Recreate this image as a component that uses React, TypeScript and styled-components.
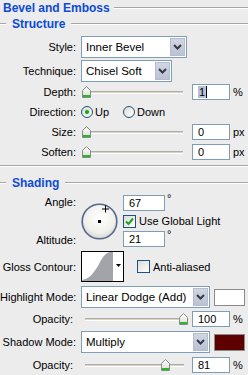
import React from "react";
import styled, { createGlobalStyle } from "styled-components";

const Global = createGlobalStyle`
  body {
    margin: 0;
    background: #ececec;
  }
`;

const Panel = styled.div`
  width: 248px;
  height: 375px;
  overflow: hidden;
  background: #ececec;
  font-family: "Liberation Sans", Arial, sans-serif;
  font-size: 11px;
  color: #000;
  display: flex;
  flex-direction: column;
`;

const Groove = styled.div`
  flex: 1;
  height: 0;
  border-top: 1px solid #a6a6a6;
  border-bottom: 1px solid #ffffff;
`;

const TitleRow = styled.div`
  height: 16px;
  display: flex;
  align-items: center;
  gap: 4px;
  padding-left: 3px;
`;

const Title = styled.span`
  font-weight: bold;
  font-size: 12px;
  color: #0b4bd6;
`;

const SubRow = styled.div<{ $mt?: number }>`
  height: 16px;
  margin-top: ${(p) => p.$mt ?? 0}px;
  display: flex;
  align-items: center;
  gap: 6px;
`;

const Stub = styled.div`
  width: 6px;
  border-top: 1px solid #a6a6a6;
  border-bottom: 1px solid #ffffff;
`;

const Divider = styled.div`
  margin-top: 5px;
  border-top: 1px solid #a6a6a6;
  border-bottom: 1px solid #ffffff;
`;

const Row = styled.div<{ $h: number; $mt: number }>`
  height: ${(p) => p.$h}px;
  margin-top: ${(p) => p.$mt}px;
  display: flex;
  align-items: center;
`;

const Label = styled.div<{ $w?: number }>`
  width: ${(p) => p.$w ?? 76}px;
  text-align: right;
  margin-right: ${(p) => 81 - (p.$w ?? 76)}px;
  flex-shrink: 0;
  white-space: nowrap;
`;

const Select = styled.div<{ $w: number }>`
  width: ${(p) => p.$w}px;
  height: 22px;
  box-sizing: border-box;
  border: 1px solid #7f9db9;
  background: #fff;
  display: flex;
  align-items: center;
  padding: 1px;
  font-size: 11.5px;
`;

const SelectText = styled.span`
  flex: 1;
  padding-left: 3px;
`;

const SelectButton = styled.div`
  width: 15px;
  height: 18px;
  box-sizing: border-box;
  border: 1px solid #b4bccf;
  background: linear-gradient(#d2d6e2, #bcc1d3);
  display: flex;
  align-items: center;
  justify-content: center;
`;

const Slider = styled.div<{ $w: number; $ml: number }>`
  width: ${(p) => p.$w}px;
  margin-left: ${(p) => p.$ml}px;
  height: 14px;
  position: relative;
  display: flex;
  align-items: center;
`;

const Track = styled.div`
  width: 100%;
  height: 1px;
  border-top: 1px solid #b0ada2;
  border-bottom: 1px solid #ffffff;
  background: #d6d3ca;
`;

const ThumbWrap = styled.div`
  position: absolute;
  top: 1px;
  width: 9px;
  height: 12px;
`;

const NumBox = styled.div<{ $ml?: number; $w?: number }>`
  width: ${(p) => p.$w ?? 38}px;
  height: 16px;
  margin-left: ${(p) => p.$ml ?? 0}px;
  box-sizing: border-box;
  border: 1px solid #7f9db9;
  background: #fff;
  display: flex;
  align-items: center;
  padding-left: 5px;
  flex-shrink: 0;
`;

const Unit = styled.span`
  margin-left: 3px;
`;

const Selected = styled.span`
  background: #b6c0d8;
  padding: 0 1px;
  border-right: 1px solid #000;
`;

const RadioItem = styled.label<{ $ml?: number }>`
  display: flex;
  align-items: center;
  gap: 2px;
  margin-left: ${(p) => p.$ml ?? 0}px;
`;

const RadioDot = styled.span<{ $on?: boolean }>`
  width: 12px;
  height: 12px;
  box-sizing: border-box;
  border-radius: 50%;
  border: 1px solid #1c5180;
  background: linear-gradient(135deg, #dcdcd6, #ffffff);
  display: flex;
  align-items: center;
  justify-content: center;
  &::after {
    content: "";
    width: 4px;
    height: 4px;
    border-radius: 50%;
    background: ${(p) => (p.$on ? "#21a121" : "transparent")};
    box-shadow: ${(p) => (p.$on ? "0 0 1px #5fd35f" : "none")};
  }
`;

const CheckItem = styled.label<{ $ml?: number }>`
  display: flex;
  align-items: center;
  gap: 3px;
  margin-left: ${(p) => p.$ml ?? 0}px;
`;

const Box = styled.span`
  width: 13px;
  height: 13px;
  box-sizing: border-box;
  border: 1px solid #1c5180;
  background: linear-gradient(135deg, #dcdcd6, #ffffff);
  display: flex;
  align-items: center;
  justify-content: center;
`;

const AngleGrid = styled.div`
  margin-top: 4px;
  display: grid;
  grid-template-columns: 76px 37px 44px 1fr;
  grid-template-rows: 16px 12px 16px;
  row-gap: 4px;
  column-gap: 5px;
  align-items: center;
`;

const GridLabel = styled.div<{ $row: number }>`
  grid-column: 1;
  grid-row: ${(p) => p.$row};
  text-align: right;
  align-self: center;
  margin-top: ${(p) => (p.$row === 1 ? -3 : 1)}px;
`;

const Dial = styled.div`
  grid-column: 2;
  grid-row: 1 / 4;
  align-self: center;
  width: 37px;
  height: 37px;
`;

const GridCell = styled.div<{ $row: number }>`
  grid-column: 3 / 5;
  grid-row: ${(p) => p.$row};
  display: flex;
  align-items: center;
`;

const Degree = styled.span`
  align-self: flex-start;
  margin-left: 2px;
  margin-top: -3px;
`;

const Contour = styled.div`
  width: 43px;
  height: 31px;
  box-sizing: border-box;
  border: 1px solid #000;
  background: #fff;
  display: flex;
`;

const ContourArrow = styled.div`
  flex: 1;
  display: flex;
  align-items: center;
  justify-content: center;
  padding-bottom: 2px;
`;

const Swatch = styled.div<{ $c: string }>`
  width: 31px;
  height: 17px;
  margin-left: 4px;
  box-sizing: border-box;
  border: 1px solid #8a8a8a;
  background: ${(p) => p.$c};
`;

const Chevron = () => (
  <svg width="9" height="6" viewBox="0 0 9 6">
    <path d="M1 1 L4.5 4.5 L8 1" fill="none" stroke="#333a4a" strokeWidth="2" />
  </svg>
);

const Thumb = () => (
  <svg width="9" height="12" viewBox="0 0 9 12">
    <defs>
      <linearGradient id="tg" x1="0" y1="0" x2="0" y2="1">
        <stop offset="0" stopColor="#ffffff" />
        <stop offset="1" stopColor="#dcdcd0" />
      </linearGradient>
    </defs>
    <path d="M0.5 4.5 L4.5 0.5 L8.5 4.5 L8.5 11.5 L0.5 11.5 Z" fill="url(#tg)" stroke="#7f8c8a" />
    <rect x="1" y="9" width="7" height="2" fill="#2bb52b" />
  </svg>
);

const Check = () => (
  <svg width="9" height="9" viewBox="0 0 9 9">
    <path d="M1 4.5 L3.5 7 L8 1.5" fill="none" stroke="#21a121" strokeWidth="2" />
  </svg>
);

function SliderRow({
  label,
  value,
  unit,
  pos,
  mt,
  lw,
  sw = 101,
  sml = 1,
}: {
  label: string;
  value: React.ReactNode;
  unit: string;
  pos: number;
  mt: number;
  lw?: number;
  sw?: number;
  sml?: number;
}) {
  return (
    <Row $h={16} $mt={mt}>
      <Label $w={lw}>{label}</Label>
      <Slider $w={sw} $ml={sml}>
        <Track />
        <ThumbWrap style={{ left: pos }}>
          <Thumb />
        </ThumbWrap>
      </Slider>
      <NumBox $ml={192 - 81 - sml - sw}>{value}</NumBox>
      <Unit>{unit}</Unit>
    </Row>
  );
}

export default function App() {
  return (
    <Panel>
      <Global />
      <TitleRow>
        <Title>Bevel and Emboss</Title>
        <Groove />
      </TitleRow>
      <SubRow>
        <Stub />
        <Title>Structure</Title>
        <Groove />
      </SubRow>

      <Row $h={22} $mt={4}>
        <Label>Style:</Label>
        <Select $w={106}>
          <SelectText>Inner Bevel</SelectText>
          <SelectButton>
            <Chevron />
          </SelectButton>
        </Select>
      </Row>
      <Row $h={22} $mt={2}>
        <Label>Technique:</Label>
        <Select $w={91}>
          <SelectText>Chisel Soft</SelectText>
          <SelectButton>
            <Chevron />
          </SelectButton>
        </Select>
      </Row>

      <SliderRow
        label="Depth:"
        mt={2}
        pos={0}
        unit="%"
        value={<Selected>1</Selected>}
      />

      <Row $h={14} $mt={5}>
        <Label>Direction:</Label>
        <RadioItem>
          <RadioDot $on />
          Up
        </RadioItem>
        <RadioItem $ml={14}>
          <RadioDot />
          Down
        </RadioItem>
      </Row>

      <SliderRow label="Size:" mt={5} pos={0} unit="px" value="0" />
      <SliderRow label="Soften:" mt={4} pos={0} unit="px" value="0" />

      <Divider />

      <SubRow $mt={8}>
        <Stub />
        <Title>Shading</Title>
        <Groove />
      </SubRow>

      <AngleGrid>
        <GridLabel $row={1}>Angle:</GridLabel>
        <Dial>
          <svg width="37" height="37" viewBox="0 0 37 37">
            <defs>
              <radialGradient id="dg" cx="0.5" cy="0.4" r="0.6">
                <stop offset="0" stopColor="#ffffff" />
                <stop offset="0.7" stopColor="#f0f0ec" />
                <stop offset="1" stopColor="#d6d6d0" />
              </radialGradient>
            </defs>
            <circle cx="18.5" cy="18.5" r="17.3" fill="url(#dg)" stroke="#56668e" strokeWidth="1.6" />
            <rect x="17" y="17" width="3" height="3" fill="#000" />
            <path d="M24.5 2.5 V9.5 M21 6 H28" stroke="#000" strokeWidth="1" />
          </svg>
        </Dial>
        <GridCell $row={1}>
          <NumBox $w={42}>67</NumBox>
          <Degree>°</Degree>
        </GridCell>
        <GridCell $row={2}>
          <CheckItem>
            <Box>
              <Check />
            </Box>
            Use Global Light
          </CheckItem>
        </GridCell>
        <GridLabel $row={3}>Altitude:</GridLabel>
        <GridCell $row={3}>
          <NumBox $w={42}>21</NumBox>
          <Degree>°</Degree>
        </GridCell>
      </AngleGrid>

      <Row $h={31} $mt={4}>
        <Label>Gloss Contour:</Label>
        <Contour>
          <svg width="31" height="29" viewBox="0 0 31 29">
            <path
              d="M0 29 L0 28 C 8 27, 12 20, 16 14 C 20 6, 23 1, 28 0 L 31 0 L 31 29 Z"
              fill="#a3a3aa"
            />
          </svg>
          <ContourArrow>
            <svg width="5" height="3" viewBox="0 0 5 3">
              <path d="M0 0 H5 L2.5 3 Z" fill="#000" />
            </svg>
          </ContourArrow>
        </Contour>
        <CheckItem $ml={13}>
          <Box />
          Anti-aliased
        </CheckItem>
      </Row>

      <Row $h={22} $mt={4}>
        <Label>Highlight Mode:</Label>
        <Select $w={129}>
          <SelectText>Linear Dodge (Add)</SelectText>
          <SelectButton>
            <Chevron />
          </SelectButton>
        </Select>
        <Swatch $c="#ffffff" />
      </Row>

      <SliderRow
        label="Opacity:"
        lw={73}
        mt={3}
        pos={94}
        sml={4}
        sw={103}
        unit="%"
        value="100"
      />

      <Row $h={22} $mt={4}>
        <Label>Shadow Mode:</Label>
        <Select $w={129}>
          <SelectText>Multiply</SelectText>
          <SelectButton>
            <Chevron />
          </SelectButton>
        </Select>
        <Swatch $c="#5c0000" />
      </Row>

      <SliderRow
        label="Opacity:"
        lw={73}
        mt={4}
        pos={76}
        sml={4}
        sw={99}
        unit="%"
        value="81"
      />
    </Panel>
  );
}
